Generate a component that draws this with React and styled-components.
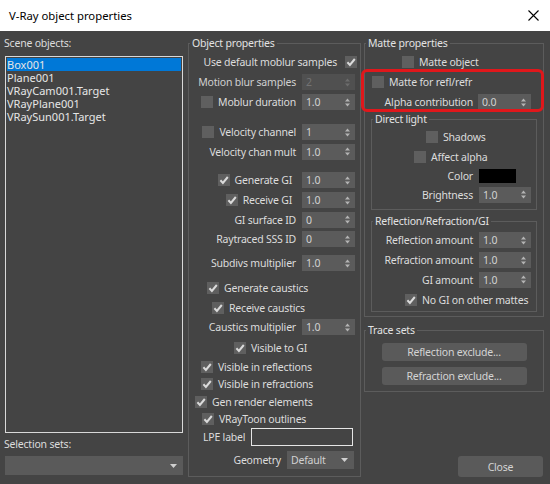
import React from 'react';
import styled, { createGlobalStyle } from 'styled-components';

const Global = createGlobalStyle`
  *, *::before, *::after {
    box-sizing: border-box;
  }
  html, body {
    margin: 0;
    padding: 0;
    background: #444444;
  }
  body {
    font-family: "Noto Sans", "Segoe UI", sans-serif;
    font-size: 10.5px;
    letter-spacing: -0.2px;
    color: #dcdcdc;
  }
`;

const Window = styled.div`
  width: 550px;
  height: 484px;
  display: flex;
  flex-direction: column;
  background: #444444;
  overflow: hidden;
`;

const TitleBar = styled.div`
  flex: none;
  height: 31px;
  background: #ffffff;
  display: flex;
  align-items: center;
  justify-content: space-between;
  padding: 0 11px 0 9px;
`;

const Title = styled.span`
  color: #000;
  font-size: 11.3px;
  letter-spacing: 0;
`;

const Body = styled.div`
  flex: 1;
  display: flex;
  gap: 3px;
  padding: 5px 6px 7px 4px;
  min-height: 0;
`;

const LeftCol = styled.div`
  width: 181px;
  flex: none;
  display: flex;
  flex-direction: column;
  padding-bottom: 2px;
`;

const Caption = styled.div`
  line-height: 14px;
  height: 14px;
  margin-top: ${p => p.$mt || 0}px;
`;

const ListBox = styled.div`
  flex: 1;
  margin: 6px 2px 0 1px;
  border: 1px solid #d9d9d9;
  padding: 1px;
  background: #444;
`;

const ListItem = styled.div`
  height: 13px;
  line-height: 13px;
  font-size: 11px;
  letter-spacing: 0;
  color: #e6e6e6;
  background: ${p => (p.$selected ? '#0078d7' : 'transparent')};
  white-space: nowrap;
`;

const Combo = styled.div`
  height: ${p => p.$h || 18}px;
  width: ${p => (p.$w ? `${p.$w}px` : 'auto')};
  margin: ${p => p.$m || '0'};
  background: #5a5a5a;
  color: #d0d0d0;
  display: flex;
  align-items: center;
  justify-content: space-between;
  padding: 0 6px 0 4px;
  flex: none;
`;

const Group = styled.fieldset`
  margin: ${p => p.$m || '0'};
  padding: ${p => p.$pad || '0'};
  border: 1px solid #5c5c5c;
  min-width: 0;
  display: flex;
  flex-direction: column;
  width: ${p => (p.$w ? `${p.$w}px` : 'auto')};
  flex: none;
`;

const Legend = styled.legend`
  padding: 0 2px;
  margin-left: 1px;
  line-height: 14px;
  color: #e2e2e2;
`;

const Row = styled.div`
  display: flex;
  align-items: center;
  flex: none;
  white-space: nowrap;
  height: ${p => p.$h ?? 20}px;
  margin-top: ${p => p.$mt ?? 0}px;
  justify-content: ${p => (p.$indent != null ? 'flex-start' : 'flex-end')};
  padding-left: ${p => p.$indent ?? 0}px;
  padding-right: ${p => p.$pr ?? 5}px;
  gap: ${p => p.$gap ?? 6}px;
`;

const CheckLabel = styled.span`
  display: inline-flex;
  align-items: center;
  gap: 5px;
`;

const Box = styled.span`
  width: 12px;
  height: 12px;
  background: #5f5f5f;
  display: inline-flex;
  align-items: center;
  justify-content: center;
  flex: none;
`;

const SpinBox = styled.div`
  width: ${p => p.$w || 53}px;
  height: 16px;
  flex: none;
  background: ${p => (p.$disabled ? '#505050' : '#5b5b5b')};
  color: ${p => (p.$disabled ? '#737373' : '#d2d2d2')};
  display: flex;
  align-items: center;
  justify-content: space-between;
  padding: 0 5px 0 4px;
`;

const TextField = styled.div`
  width: ${p => p.$w}px;
  height: 18px;
  flex: none;
  border: 1px solid #e6e6e6;
  background: #444;
`;

const Swatch = styled.div`
  width: 37px;
  height: 14px;
  background: #000;
  flex: none;
`;

const RightCol = styled.div`
  width: 180px;
  flex: none;
  display: flex;
  flex-direction: column;
`;

const Highlight = styled.div`
  position: relative;
  display: flex;
  flex-direction: column;
  &::after {
    content: '';
    position: absolute;
    left: -4px;
    right: -1px;
    top: -3px;
    bottom: 0;
    border: 3px solid #e0171b;
    border-radius: 6px;
    pointer-events: none;
  }
`;

const PushButton = styled.div`
  width: ${p => p.$w}px;
  height: ${p => p.$h || 18}px;
  background: #5a5a5a;
  border-radius: 3px;
  color: #d4d4d4;
  display: flex;
  align-items: center;
  justify-content: center;
  flex: none;
  align-self: ${p => p.$align || 'center'};
  margin: ${p => p.$m || '0'};
`;

const Spacer = styled.div`
  flex: 1;
`;

const Check = ({ on }) => (
  <Box>
    {on && (
      <svg width="10" height="10" viewBox="0 0 10 10">
        <path d="M1.4 5.3 L3.9 7.9 L8.8 2" fill="none" stroke="#dadada" strokeWidth="2" />
      </svg>
    )}
  </Box>
);

const Spinner = ({ value, w, disabled }) => (
  <SpinBox $w={w} $disabled={disabled}>
    <span>{value}</span>
    <svg width="5" height="9" viewBox="0 0 5 9">
      <path d="M0 3.5 L5 3.5 L2.5 0.5 Z M0 5.5 L5 5.5 L2.5 8.5 Z" fill={disabled ? '#6c6c6c' : '#b4b4b4'} />
    </svg>
  </SpinBox>
);

const DownArrow = () => (
  <svg width="7" height="4" viewBox="0 0 7 4">
    <path d="M0 0 L7 0 L3.5 4 Z" fill="#cfcfcf" />
  </svg>
);

const CheckRow = ({ label, on, ...rest }) => (
  <Row {...rest}>
    <CheckLabel>
      <Check on={on} />
      <span>{label}</span>
    </CheckLabel>
  </Row>
);

const objects = ['Box001', 'Plane001', 'VRayCam001.Target', 'VRayPlane001', 'VRaySun001.Target'];

export default function App() {
  return (
    <Window>
      <Global />
      <TitleBar>
        <Title>V-Ray object properties</Title>
        <svg width="11" height="11" viewBox="0 0 11 11">
          <path d="M0.5 0.5 L10.5 10.5 M10.5 0.5 L0.5 10.5" stroke="#000" strokeWidth="1.1" />
        </svg>
      </TitleBar>

      <Body>
        <LeftCol>
          <Caption>Scene objects:</Caption>
          <ListBox>
            {objects.map((o, i) => (
              <ListItem key={o} $selected={i === 0}>{o}</ListItem>
            ))}
          </ListBox>
          <Caption $mt={4}>Selection sets:</Caption>
          <Combo $h={19} $m="5px 2px 0 1px">
            <span />
            <DownArrow />
          </Combo>
        </LeftCol>

        <Group $w={173} $pad="2px 0 0 0">
          <Legend>Object properties</Legend>
          <Row $pr={3} $gap={8}>
            <span>Use default moblur samples</span>
            <Check on />
          </Row>
          <Row>
            <span style={{ color: '#d0d0d0' }}>Motion blur samples</span>
            <Spinner value="2" disabled />
          </Row>
          <Row>
            <CheckLabel><Check /><span>Moblur duration</span></CheckLabel>
            <Spinner value="1.0" />
          </Row>
          <Row $mt={10}>
            <CheckLabel><Check /><span>Velocity channel</span></CheckLabel>
            <Spinner value="1" />
          </Row>
          <Row $h={19}>
            <span>Velocity chan mult</span>
            <Spinner value="1.0" />
          </Row>
          <Row $mt={9} $gap={10}>
            <CheckLabel><Check on /><span>Generate GI</span></CheckLabel>
            <Spinner value="1.0" />
          </Row>
          <Row $gap={10}>
            <CheckLabel><Check on /><span>Receive GI</span></CheckLabel>
            <Spinner value="1.0" />
          </Row>
          <Row $h={19}>
            <span>GI surface ID</span>
            <Spinner value="0" />
          </Row>
          <Row>
            <span>Raytraced SSS ID</span>
            <Spinner value="0" />
          </Row>
          <Row $mt={4}>
            <span>Subdivs multiplier</span>
            <Spinner value="1.0" />
          </Row>
          <CheckRow label="Generate caustics" on $mt={5} $indent={18} />
          <CheckRow label="Receive caustics" on $h={19} $indent={23} />
          <Row>
            <span>Caustics multiplier</span>
            <Spinner value="1.0" />
          </Row>
          <CheckRow label="Visible to GI" on $mt={1} $indent={45} />
          <CheckRow label="Visible in reflections" on $h={17} $indent={12} />
          <CheckRow label="Visible in refractions" on $h={18} $indent={12} />
          <CheckRow label="Gen render elements" on $h={17} $indent={6} />
          <CheckRow label="VRayToon outlines" on $h={18} $indent={13} />
          <Row $h={18} $indent={14}>
            <span>LPE label</span>
            <TextField $w={102} />
          </Row>
          <Row $h={22} $mt={3} $pr={6}>
            <span>Geometry</span>
            <Combo $w={67}>
              <span>Default</span>
              <DownArrow />
            </Combo>
          </Row>
        </Group>

        <RightCol>
          <Group $pad="2px 0 4px 0">
            <Legend>Matte properties</Legend>
            <CheckRow label="Matte object" $indent={37} />
            <Highlight>
              <CheckRow label="Matte for refl/refr" $indent={7} />
              <Row $pr={12} $gap={5}>
                <span>Alpha contribution</span>
                <Spinner value="0.0" />
              </Row>
            </Highlight>
            <Group $m="0 6px" $pad="1px 0 5px 0">
              <Legend>Direct light</Legend>
              <CheckRow label="Shadows" $indent={54} />
              <CheckRow label="Affect alpha" $h={19} $indent={42} />
              <Row $h={19} $pr={20}>
                <span>Color</span>
                <Swatch />
              </Row>
              <Row $h={19}>
                <span>Brightness</span>
                <Spinner value="1.0" w={52} />
              </Row>
            </Group>
            <Group $m="4px 6px 0 6px" $pad="2px 0 1px 0">
              <Legend>Reflection/Refraction/GI</Legend>
              <Row>
                <span>Reflection amount</span>
                <Spinner value="1.0" w={52} />
              </Row>
              <Row>
                <span>Refraction amount</span>
                <Spinner value="1.0" w={52} />
              </Row>
              <Row $h={19}>
                <span>GI amount</span>
                <Spinner value="1.0" w={52} />
              </Row>
              <CheckRow label="No GI on other mattes" on $h={21} $indent={33} />
            </Group>
          </Group>

          <Group $m="6px 0 0 0" $pad="6px 0 6px 0">
            <Legend>Trace sets</Legend>
            <PushButton $w={145}>Reflection exclude...</PushButton>
            <PushButton $w={145} $m="6px 0 0 0">Refraction exclude...</PushButton>
          </Group>

          <Spacer />
          <PushButton $w={85} $h={21} $align="flex-end" $m="0 1px 0 0">Close</PushButton>
        </RightCol>
      </Body>
    </Window>
  );
}
